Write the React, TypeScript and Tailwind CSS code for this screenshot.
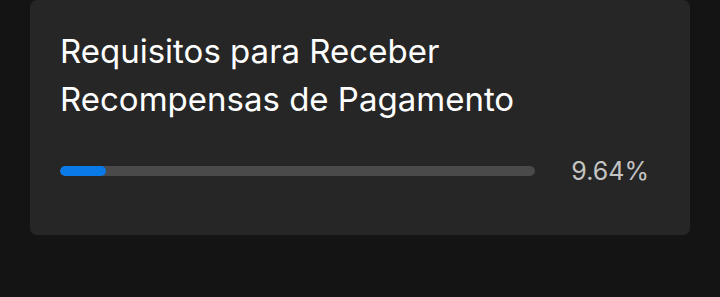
import React from 'react'

const progress = 9.64

const App = () => {
  return (
    <div className="w-[720px] h-[297px] bg-[#141414] pl-[30px]" style={{ fontFamily: 'Inter, "Noto Sans", sans-serif' }}>
      <div className="w-[660px] h-[235px] rounded-[7px] bg-[#262626] pl-[30px] pr-[41px] pt-[27px]">
        <h2 className="text-[33px] leading-[48px] text-white font-normal">
          Requisitos para Receber
          <br />
          Recompensas de Pagamento
        </h2>
        <div className="flex items-center mt-[34px]">
          <div className="w-[475px] h-[10px] rounded-[5px] bg-[#4a4a4a] overflow-hidden">
            <div className="h-full rounded-[5px] bg-[#0a7ae8]" style={{ width: `${progress}%` }} />
          </div>
          <span className="ml-auto text-[25px] leading-[28px] text-[#c4c4c4]">{progress}%</span>
        </div>
      </div>
    </div>
  )
}

export default App
